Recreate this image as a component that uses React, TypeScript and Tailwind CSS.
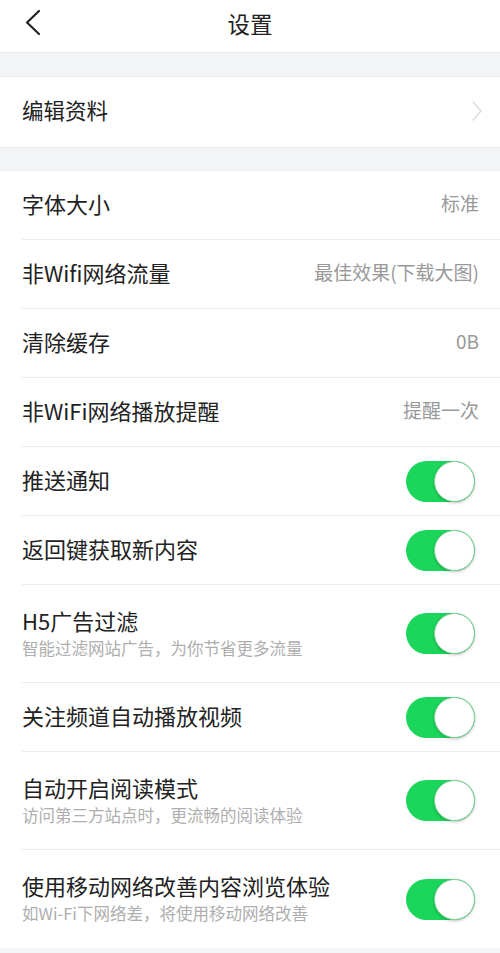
const font = 'font-["Noto_Sans_CJK_SC","Noto_Sans",sans-serif]'

type Row = {
  label: string
  sub?: string
  value?: string
  toggle?: boolean
}

const rows: Row[] = [
  { label: '字体大小', value: '标准' },
  { label: '非Wifi网络流量', value: '最佳效果(下载大图)' },
  { label: '清除缓存', value: '0B' },
  { label: '非WiFi网络播放提醒', value: '提醒一次' },
  { label: '推送通知', toggle: true },
  { label: '返回键获取新内容', toggle: true },
  { label: 'H5广告过滤', sub: '智能过滤网站广告，为你节省更多流量', toggle: true },
  { label: '关注频道自动播放视频', toggle: true },
  { label: '自动开启阅读模式', sub: '访问第三方站点时，更流畅的阅读体验', toggle: true },
  { label: '使用移动网络改善内容浏览体验', sub: '如Wi-Fi下网络差，将使用移动网络改善', toggle: true },
]

function Toggle() {
  return (
    <div className="w-[69px] h-[41px] rounded-full bg-[#1ad75b] flex items-center justify-end">
      <div className="w-[41px] h-[41px] rounded-full bg-white border border-[#7fd197] shadow-[0_1px_3px_rgba(0,0,0,0.25)]" />
    </div>
  )
}

export default function App() {
  return (
    <div className={`w-[500px] h-[953px] bg-[#f4f5f7] ${font} text-[#222] overflow-hidden`}>
      {/* Header */}
      <div className="h-[52px] bg-white flex items-center relative">
        <svg className="absolute left-[24px] top-[9px]" width="18" height="28" viewBox="0 0 18 28">
          <path d="M15 2 L3 13.5 L15 25" fill="none" stroke="#222" strokeWidth="2.2" strokeLinecap="round" strokeLinejoin="round" />
        </svg>
        <div className="w-full text-center text-[22.5px] leading-none pb-[6px]">设置</div>
      </div>

      <div className="h-[24px] border-t border-[#ebecee]" />

      {/* Edit profile */}
      <div className="h-[71px] bg-white flex items-center justify-between pl-[22px] pr-[17px] pb-[3px] border-t border-[#ebecee]">
        <span className="text-[21.5px]">编辑资料</span>
        <svg width="12" height="22" viewBox="0 0 12 22">
          <path d="M2 2 L10 11 L2 20" fill="none" stroke="#dcdcdc" strokeWidth="1.6" strokeLinecap="round" strokeLinejoin="round" />
        </svg>
      </div>

      <div className="h-[23px] border-t border-[#ebecee]" />

      {/* Settings list */}
      <div className="bg-white border-t border-[#ebecee]">
        {rows.map((row, i) => (
          <div key={i} className="pl-[22px]">
            <div
              className={`flex items-center justify-between pr-[21px] ${row.sub ? 'h-[98px]' : 'h-[69px]'} ${
                i < rows.length - 1 ? 'border-b border-[#ececec]' : ''
              }`}
            >
              <div className="flex flex-col pb-[4px]">
                <span className="text-[22px] leading-[30px]">{row.label}</span>
                {row.sub && (
                  <span className="text-[16.5px] leading-[22px] text-[#aeaeae] mt-[2px]">{row.sub}</span>
                )}
              </div>
              {row.value && <span className="text-[19px] text-[#999999] pb-[4px]">{row.value}</span>}
              {row.toggle && (
                <div className="mr-[4px]">
                  <Toggle />
                </div>
              )}
            </div>
          </div>
        ))}
      </div>
    </div>
  )
}
